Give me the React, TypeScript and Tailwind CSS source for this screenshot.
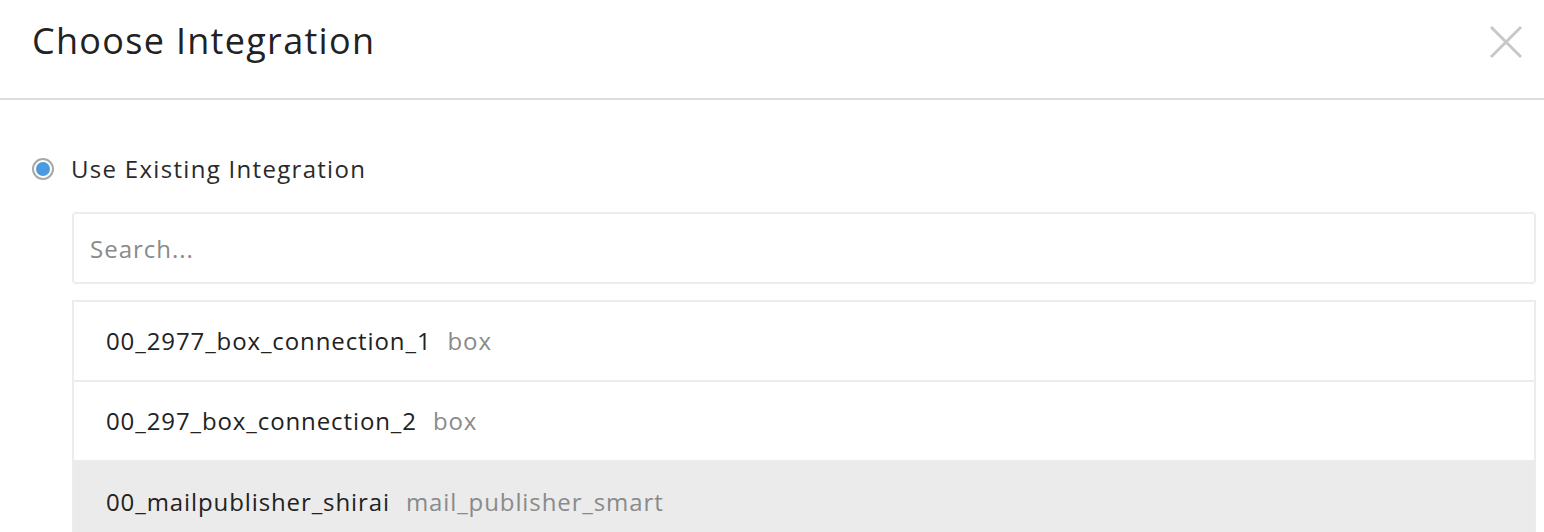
import React, { useState } from 'react';

const rows = [
  { name: '00_2977_box_connection_1', type: 'box' },
  { name: '00_297_box_connection_2', type: 'box' },
  { name: '00_mailpublisher_shirai', type: 'mail_publisher_smart' },
];

const App: React.FC = () => {
  const [query, setQuery] = useState('');
  const [selected] = useState(2);

  return (
    <div className="w-[1544px] h-[532px] overflow-hidden bg-white font-['Open_Sans','Lato',sans-serif] text-[#222]">
      <div className="flex items-center justify-between h-[100px] pl-8 pr-5 border-b-2 border-[#dddddd]">
        <h1 className="text-[36px] leading-none tracking-[1.3px] pb-[16px]">Choose Integration</h1>
        <button className="w-[36px] h-[36px] mb-[14px] flex items-center justify-center">
          <svg width="34" height="34" viewBox="0 0 34 34">
            <path d="M2 2 L32 32 M32 2 L2 32" stroke="#c8c8c8" strokeWidth="3" />
          </svg>
        </button>
      </div>

      <div className="pl-8 pr-2 pt-[56px]">
        <label className="flex items-center gap-[17px] h-[26px]">
          <span className="w-[22px] h-[22px] rounded-full border-2 border-[#a8a8a8] bg-white flex items-center justify-center">
            <span className="w-[14px] h-[14px] rounded-full bg-[#4a9ae0]" />
          </span>
          <span className="text-[24px] leading-none tracking-[1.3px] text-[#2a2a2a]">Use Existing Integration</span>
        </label>

        <div className="ml-10 mt-[30px]">
          <input
            value={query}
            onChange={(e) => setQuery(e.target.value)}
            placeholder="Search..."
            className="w-full h-[72px] px-[16px] text-[24px] tracking-[1px] border-2 border-[#ececec] rounded-[4px] outline-none placeholder-[#8a8a8a]"
          />

          <ul className="mt-[16px] border-2 border-b-0 border-[#ececec]">
            {rows.map((r, i) => (
              <li
                key={r.name}
                className={`h-[80px] flex items-center gap-[16px] pl-[32px] text-[24px] tracking-[0.9px] ${
                  i < rows.length - 1 ? 'border-b-2 border-[#ececec]' : ''
                } ${i === selected ? 'bg-[#ebebeb]' : 'bg-white'}`}
              >
                <span className="text-[#222]">{r.name}</span>
                <span className="text-[#8a8a8a]">{r.type}</span>
              </li>
            ))}
          </ul>
        </div>
      </div>
    </div>
  );
};

export default App;
